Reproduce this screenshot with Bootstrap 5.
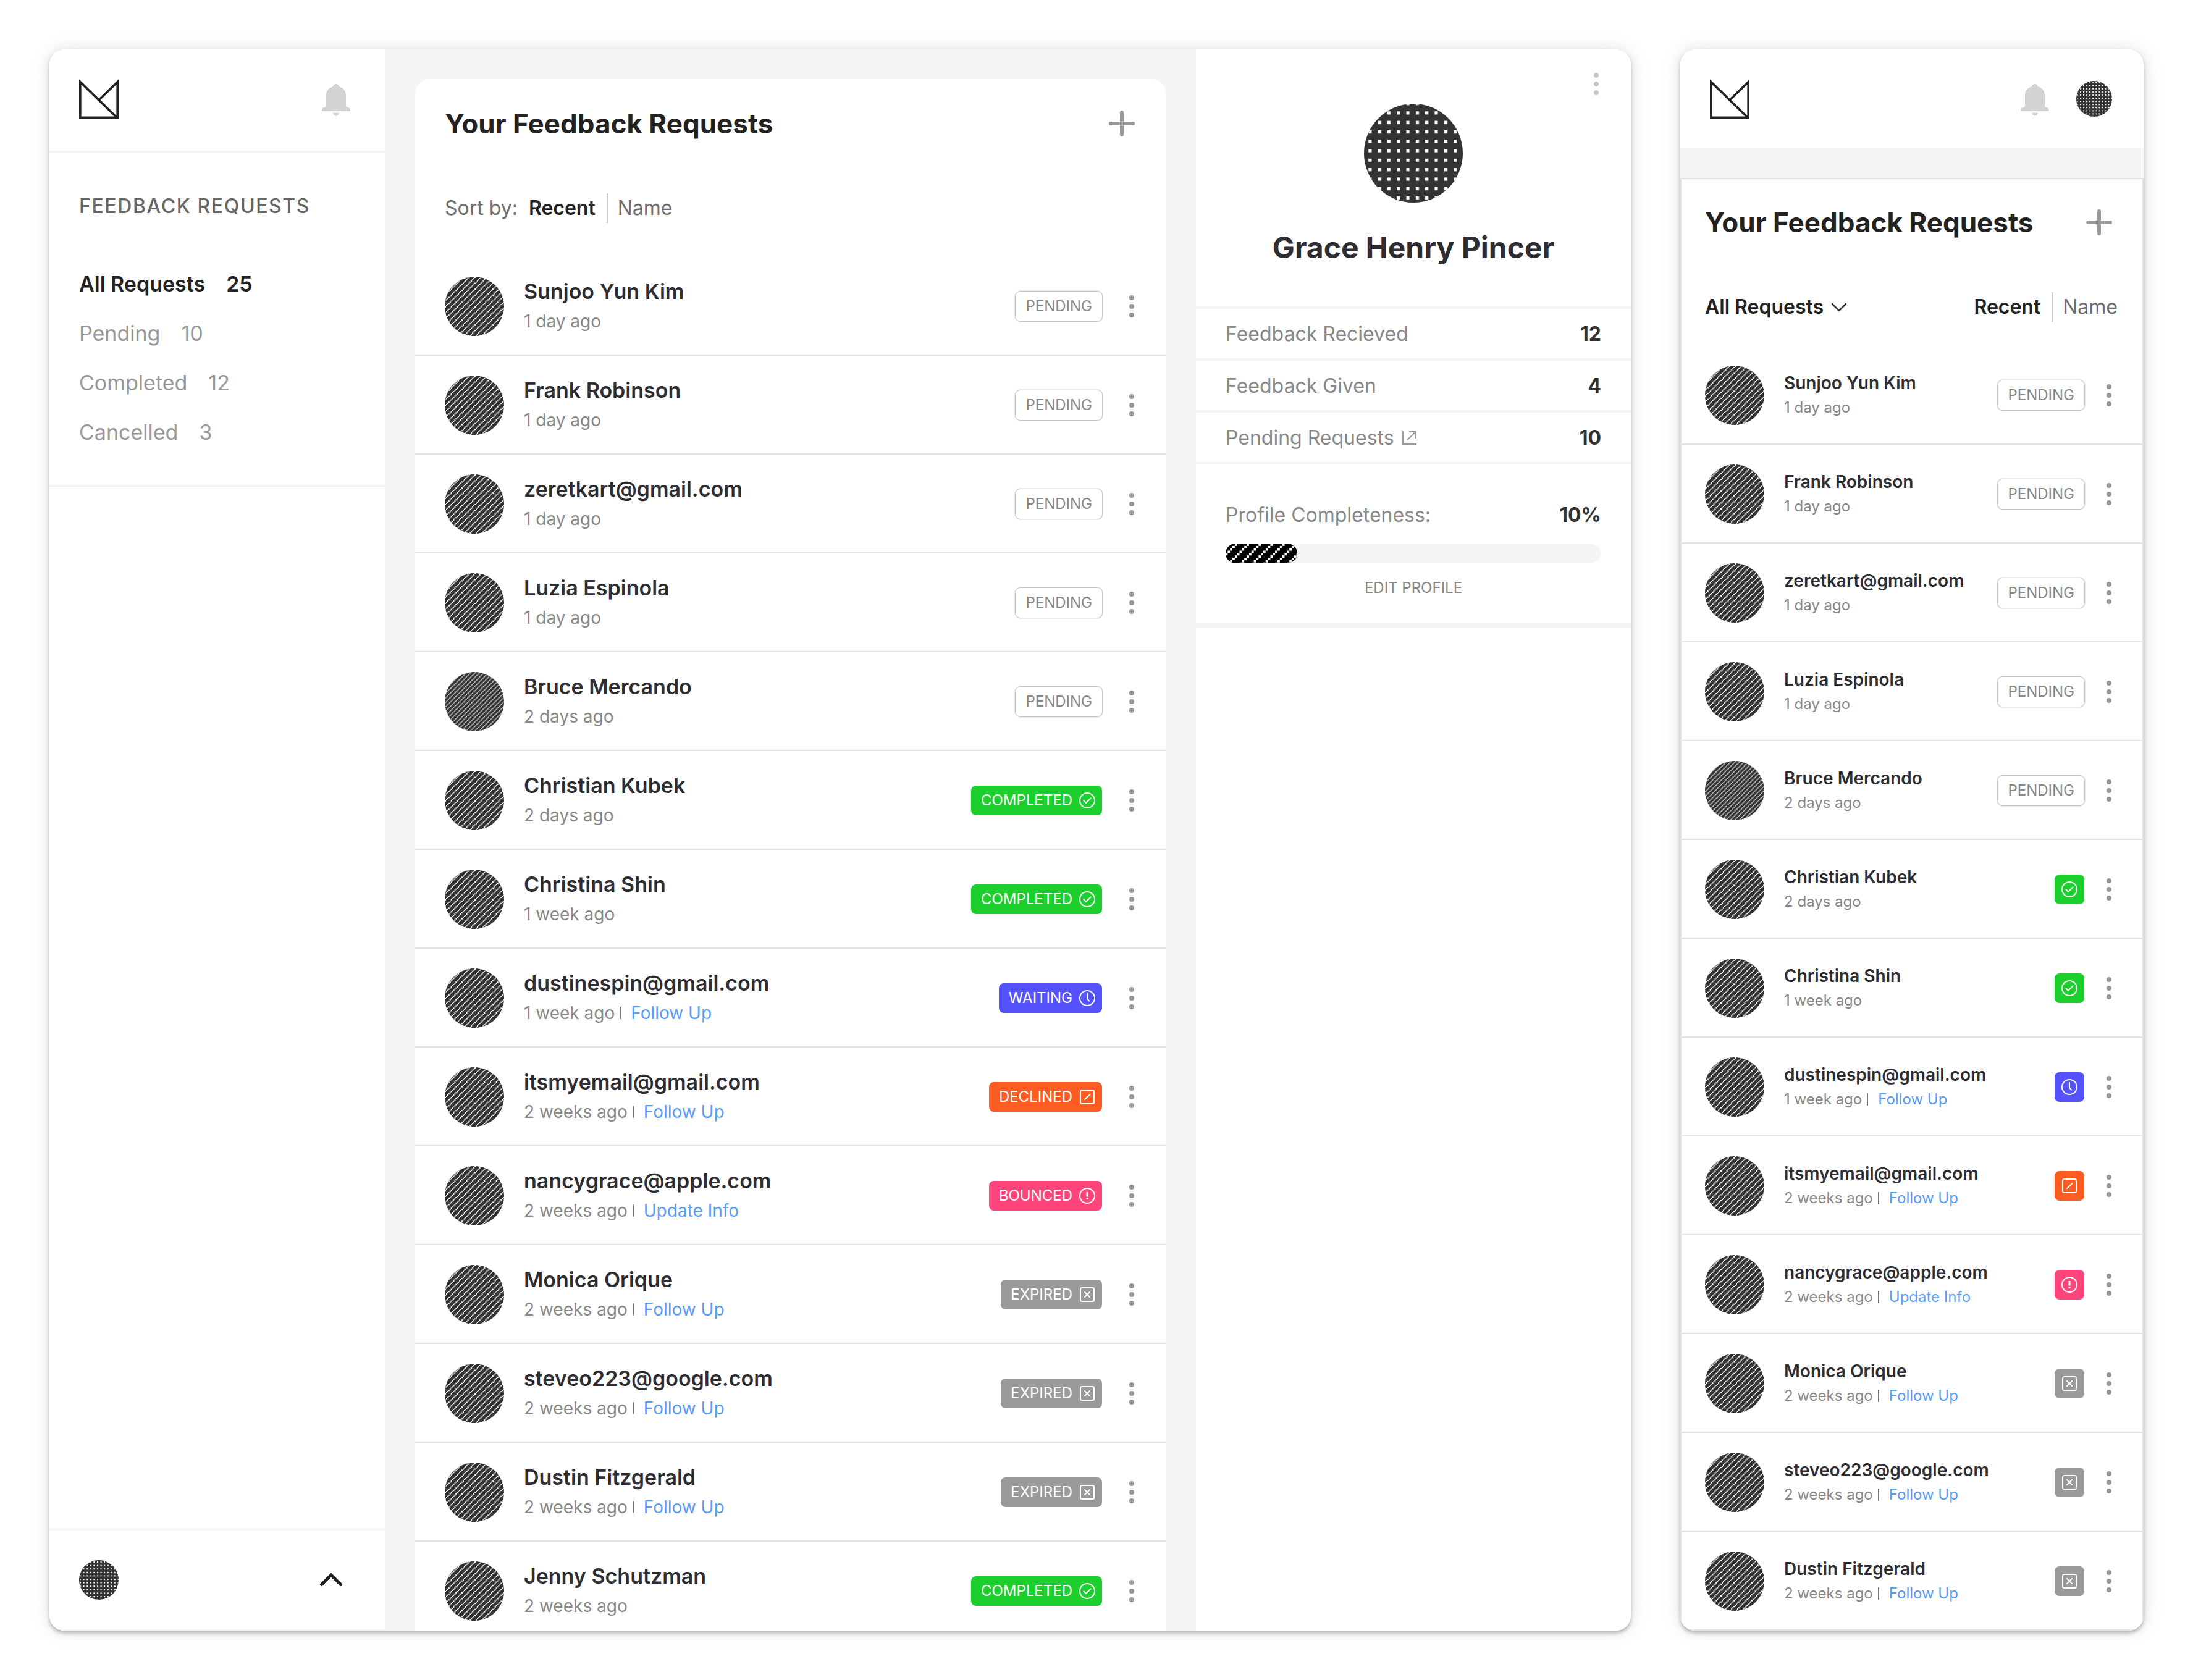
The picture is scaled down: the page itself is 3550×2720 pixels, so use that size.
<!DOCTYPE html>
<html lang="en">
<head>
<meta charset="utf-8">
<meta name="viewport" content="width=device-width, initial-scale=1">
<title>Your Feedback Requests</title>
<link rel="stylesheet" href="https://cdn.jsdelivr.net/npm/bootstrap@5.3.0/dist/css/bootstrap.min.css">
<script src="https://cdn.jsdelivr.net/npm/bootstrap@5.3.0/dist/js/bootstrap.bundle.min.js" defer></script>
<style>
  body { font-family: Inter, "Liberation Sans", sans-serif; font-size: 32px; line-height: 48px; color: #222; background: #fff; padding: 80px; gap: 80px; }
  button, select { font: inherit; color: inherit; background: none; border: 0; padding: 0; }
  svg { display: block; flex: none; }
  h1, h2, ul, p, dl, dd, dt { margin: 0; }
  .app-window { background: #f5f5f5; border-radius: 24px; overflow: hidden; box-shadow: 0 4px 6px rgba(0,0,0,.27), 0 0 32px rgba(0,0,0,.12); }
  .phone { flex: 0 0 750px; }

  .side { flex: 0 0 544px; border-bottom: 2px solid #f5f5f5; }
  .side-top { padding: 48px 56px 52px 48px; border-bottom: 4px solid #f5f5f5; }
  .side-nav { padding: 62px 48px 46px; border-bottom: 2px solid #f5f5f5; }
  .side-nav h2 { font-size: 32px; line-height: 48px; font-weight: 500; color: #666; letter-spacing: .05em; margin-bottom: 62px; }
  .side-nav a { display: flex; gap: 34px; font-size: 34px; line-height: 80px; color: #999; text-decoration: none; }
  .side-nav a.active { color: #222; font-weight: 600; }
  .side-foot { padding: 48px 68px 48px 48px; border-top: 4px solid #f5f5f5; }

  .main-col { padding: 48px 48px 0; }
  .request-panel { border-radius: 24px 24px 0 0; }
  .panel-title { font-size: 44px; line-height: 48px; font-weight: 700; }
  .panel-top { padding: 48px 48px 0; }
  .sort-bar { padding: 89px 48px 55px; color: #6d6d70; }
  .sort-bar .on { color: #222; font-weight: 600; }
  .sort-label { margin-right: 18px; }
  .sort-line { width: 2px; height: 48px; background: #c8c8c8; margin: 0 16px 0 18px; }

  .request { height: 160px; border-bottom: 2px solid #e3e3e3; padding: 2px 32px 0 48px; }
  .who { margin-left: 32px; }
  .who-name { font-size: 34px; line-height: 48px; font-weight: 600; color: #2d2d33; }
  .who-time { font-size: 28px; line-height: 48px; color: #888; }
  .who-time a { color: #5b9cf8; text-decoration: none; margin-left: 16px; }
  .bar { width: 2px; height: 20px; background: #777; margin-left: 8px; }
  .status { height: 48px; padding: 0 8px 0 16px; gap: 8px; border-radius: 8px; font-size: 24px; font-weight: 400; line-height: 48px; color: #fff; }
  .status-pending { padding: 0 16px; color: #888; background: #fff; box-shadow: 0 0 2px 1px #b0b0b0; }
  .status-completed { background: #1ccf2c; }
  .status-waiting { background: #5453ff; }
  .status-declined { background: #ff5c24; }
  .status-bounced { background: #ff457c; }
  .status-expired { background: #9a9a9a; }
  .kebab { width: 48px; height: 48px; color: #999; display: flex; align-items: center; justify-content: center; }
  .request .kebab { margin-left: 24px; }

  .profile { flex: 0 0 704px; }
  .profile > .kebab { top: 32px; right: 32px; color: #c6c6c6; }
  .profile-top { padding: 88px 48px 71px; }
  .profile-top h2 { font-size: 48px; line-height: 48px; font-weight: 700; color: #2d2d33; margin-top: 49px; }
  .stat { border-top: 4px solid #f5f5f5; padding: 2px 48px 0; line-height: 78px; color: #888; }
  .stat dt { gap: 12px; }
  .stat dd, .done dd { font-weight: 700; color: #333; }
  .done { border-top: 4px solid #f5f5f5; border-bottom: 8px solid #f5f5f5; padding: 62px 48px 40px; }
  .done dl { line-height: 40px; color: #888; }
  .meter-track { height: 32px; border-radius: 16px; background: #f5f5f5; margin: 26px 0 24px; }
  .meter-fill { border-radius: 16px; background: #000; }
  .edit { font-size: 24px; line-height: 32px; color: #888; text-decoration: none; }

  .phone-top { height: 160px; padding: 0 51px 0 48px; }
  .phone-me { margin-left: 43px; }
  .phone-body { margin-top: 48px; border: 2px solid #e3e3e3; border-bottom: 0; }
  .phone .panel-top { padding: 46px 46px 0 38px; }
  .phone .sort-bar { padding: 89px 40px 39px 38px; }
  .phone .request { padding: 2px 30px 0 38px; }
  .phone .who-name { font-size: 28px; line-height: 40px; }
  .phone .who-time { font-size: 24px; line-height: 40px; }
  .phone .status-icon { padding: 0 8px; }
  .phone .request .kebab { margin-left: 16px; }
  .filter { gap: 10px; }
  .filter select { appearance: none; -webkit-appearance: none; height: 48px; }
  .bell { padding-top: 3px; }
</style>
</head>
<body class="vh-100 d-flex">

<svg width="0" height="0" class="position-absolute" aria-hidden="true">
  <defs>
    <pattern id="stripes" width="9.6" height="9.6" patternUnits="userSpaceOnUse" patternTransform="translate(2 0)">
      <path fill="#fff" d="M0 7.7h1.9v1.9H0zM1.9 5.8h1.9v1.9H1.9zM3.8 3.8h2v2h-2zM5.8 1.9h1.9v1.9H5.8zM7.7 0h1.9v1.9H7.7z"/>
    </pattern>
    <pattern id="stripes-fine" width="7.2" height="7.2" patternUnits="userSpaceOnUse">
      <path fill="#fff" d="M0 5.800h1.400v1.400H0zM1.400 4.300h1.500v1.500H1.400zM2.900 2.900h1.400v1.400H2.900zM4.300 1.400h1.500v1.500H4.300zM5.800 0h1.400v1.400H5.800z"/>
    </pattern>
    <pattern id="stripes-bold" width="19.2" height="19.2" patternUnits="userSpaceOnUse" patternTransform="translate(-.5 0)">
      <path fill="#fff" d="M0 15.4h3.8v3.8H0zM3.8 11.5h3.8v3.8H3.8zM7.7 7.7h3.8v3.8H7.7zM11.5 3.8h3.8v3.8h-3.8zM15.4 0h3.8v3.8h-3.8z"/>
    </pattern>
    <pattern id="dots" width="15.3" height="15.3" patternUnits="userSpaceOnUse" patternTransform="translate(7.3 12.3)">
      <path fill="#fff" d="M0 0h5.2v5.2H0z"/>
    </pattern>
    <pattern id="dots-small" width="5.6" height="5.6" patternUnits="userSpaceOnUse" patternTransform="translate(1 2)">
      <path fill="#fff" d="M0 0h2v2H0z"/>
    </pattern>
  </defs>
  <symbol id="person" viewBox="0 0 96 96"><circle cx="48" cy="48" r="48" fill="#333"/><circle cx="48" cy="48" r="48" fill="url(#stripes)"/></symbol>
  <symbol id="person-fine" viewBox="0 0 96 96"><circle cx="48" cy="48" r="48" fill="#333"/><circle cx="48" cy="48" r="48" fill="url(#stripes-fine)"/></symbol>
  <symbol id="me" viewBox="0 0 160 160"><circle cx="80" cy="80" r="80" fill="#333"/><circle cx="80" cy="80" r="80" fill="url(#dots)"/></symbol>
  <symbol id="me-small" viewBox="0 0 64 64"><circle cx="32" cy="32" r="32" fill="#333"/><circle cx="32" cy="32" r="32" fill="url(#dots-small)"/></symbol>
  <symbol id="logo" viewBox="0 0 64 64"><path d="M61 62.2 1.8 4.6V62.2H62.2V4.6L32 34" fill="none" stroke="#222" stroke-width="3.6"/></symbol>
  <symbol id="bell" viewBox="0 0 48 52"><path fill="#d3d3d3" d="M24 0c2.700 0 4.700 1.700 5 4.200C36 6.200 40 11.500 40 18v16c0 2.500 1 3.600 3.400 4C46 38.500 47 40 47 42v1.200c0 .5-.3.800-.8.800H1.800c-.5 0-.8-.3-.8-.8V42c0-2 1-3.500 3.600-4C7 37.600 8 36.500 8 34V18C8 11.500 12 6.200 19 4.200 19.300 1.700 21.300 0 24 0zM19.200 46.800h9.600c0 2.700-2 4.700-4.800 4.700s-4.800-2-4.800-4.700z"/></symbol>
  <symbol id="plus" viewBox="0 0 48 48"><path d="M24 6v36M6 24h36" stroke="#999" stroke-width="6" stroke-linecap="round"/></symbol>
  <symbol id="kebab" viewBox="0 0 8 36"><g fill="currentColor"><circle cx="4" cy="4" r="4"/><circle cx="4" cy="18" r="4"/><circle cx="4" cy="32" r="4"/></g></symbol>
  <symbol id="check" viewBox="0 0 32 32"><g fill="none" stroke="#fff" stroke-width="2" stroke-linecap="round" stroke-linejoin="round"><circle cx="16" cy="16" r="12"/><path d="m10.500 16.500 3.500 3.500 7.500-7.500"/></g></symbol>
  <symbol id="clock" viewBox="0 0 32 32"><g fill="none" stroke="#fff" stroke-width="2" stroke-linecap="round" stroke-linejoin="round"><circle cx="16" cy="16" r="12"/><path d="M16 9v8l3 3.500"/></g></symbol>
  <symbol id="slash" viewBox="0 0 32 32"><g fill="none" stroke="#fff" stroke-width="2" stroke-linecap="round"><rect x="5" y="5" width="22" height="22" rx="2.500"/><path d="m12 20 8.500-8"/></g></symbol>
  <symbol id="alert" viewBox="0 0 32 32"><g fill="none" stroke="#fff" stroke-width="2"><circle cx="16" cy="16" r="12"/><path d="M16 10v7.500M16 19.500v2.500" stroke-width="3"/></g></symbol>
  <symbol id="cross" viewBox="0 0 32 32"><g fill="none" stroke="#fff" stroke-width="2" stroke-linecap="round"><rect x="5" y="5" width="22" height="22" rx="2.500"/><path d="m12 12 8 8M20 12l-8 8"/></g></symbol>
</svg>

<div class="app-window flex-grow-1 d-flex">
  <aside class="side bg-white d-flex flex-column">
    <div class="side-top d-flex justify-content-between align-items-center">
      <svg width="64" height="64" role="img" aria-label="Logo"><use href="#logo"/></svg>
      <button type="button" class="bell" aria-label="Notifications"><svg width="48" height="52"><use href="#bell"/></svg></button>
    </div>
    <nav class="side-nav">
      <h2>FEEDBACK REQUESTS</h2>
      <a href="#" class="active"><span>All Requests</span><span>25</span></a>
      <a href="#"><span>Pending</span><span>10</span></a>
      <a href="#"><span>Completed</span><span>12</span></a>
      <a href="#"><span>Cancelled</span><span>3</span></a>
    </nav>
    <div class="side-foot d-flex justify-content-between align-items-center mt-auto">
      <svg width="64" height="64"><use href="#me-small"/></svg>
      <button type="button" aria-label="Open account menu"><svg width="40" height="28" viewBox="0 0 40 28"><path d="M4.500 21.500 20 6l15.500 15.500" fill="none" stroke="#222" stroke-width="5" stroke-linecap="round"/></svg></button>
    </div>
  </aside>

  <main class="main-col flex-grow-1 d-flex flex-column">
    <section class="request-panel bg-white flex-grow-1">
      <div class="panel-top d-flex justify-content-between align-items-center">
        <h1 class="panel-title">Your Feedback Requests</h1>
        <button type="button" aria-label="New request"><svg width="48" height="48"><use href="#plus"/></svg></button>
      </div>
      <div class="sort-bar d-flex align-items-center">
        <span class="sort-label">Sort by:</span>
        <button type="button" class="on">Recent</button><span class="sort-line"></span><button type="button">Name</button>
      </div>
      <ul class="list-unstyled">
        <li class="request d-flex align-items-center"><svg width="96" height="96"><use href="#person"/></svg><div class="who flex-grow-1"><div class="who-name">Sunjoo Yun Kim</div><div class="who-time">1 day ago</div></div><span class="badge status status-pending">PENDING</span><button type="button" class="kebab" aria-label="More"><svg width="8" height="36"><use href="#kebab"/></svg></button></li>
        <li class="request d-flex align-items-center"><svg width="96" height="96"><use href="#person"/></svg><div class="who flex-grow-1"><div class="who-name">Frank Robinson</div><div class="who-time">1 day ago</div></div><span class="badge status status-pending">PENDING</span><button type="button" class="kebab" aria-label="More"><svg width="8" height="36"><use href="#kebab"/></svg></button></li>
        <li class="request d-flex align-items-center"><svg width="96" height="96"><use href="#person"/></svg><div class="who flex-grow-1"><div class="who-name">zeretkart@gmail.com</div><div class="who-time">1 day ago</div></div><span class="badge status status-pending">PENDING</span><button type="button" class="kebab" aria-label="More"><svg width="8" height="36"><use href="#kebab"/></svg></button></li>
        <li class="request d-flex align-items-center"><svg width="96" height="96"><use href="#person"/></svg><div class="who flex-grow-1"><div class="who-name">Luzia Espinola</div><div class="who-time">1 day ago</div></div><span class="badge status status-pending">PENDING</span><button type="button" class="kebab" aria-label="More"><svg width="8" height="36"><use href="#kebab"/></svg></button></li>
        <li class="request d-flex align-items-center"><svg width="96" height="96"><use href="#person-fine"/></svg><div class="who flex-grow-1"><div class="who-name">Bruce Mercando</div><div class="who-time">2 days ago</div></div><span class="badge status status-pending">PENDING</span><button type="button" class="kebab" aria-label="More"><svg width="8" height="36"><use href="#kebab"/></svg></button></li>
        <li class="request d-flex align-items-center"><svg width="96" height="96"><use href="#person"/></svg><div class="who flex-grow-1"><div class="who-name">Christian Kubek</div><div class="who-time">2 days ago</div></div><span class="badge status status-completed d-flex align-items-center">COMPLETED<svg width="32" height="32"><use href="#check"/></svg></span><button type="button" class="kebab" aria-label="More"><svg width="8" height="36"><use href="#kebab"/></svg></button></li>
        <li class="request d-flex align-items-center"><svg width="96" height="96"><use href="#person"/></svg><div class="who flex-grow-1"><div class="who-name">Christina Shin</div><div class="who-time">1 week ago</div></div><span class="badge status status-completed d-flex align-items-center">COMPLETED<svg width="32" height="32"><use href="#check"/></svg></span><button type="button" class="kebab" aria-label="More"><svg width="8" height="36"><use href="#kebab"/></svg></button></li>
        <li class="request d-flex align-items-center"><svg width="96" height="96"><use href="#person"/></svg><div class="who flex-grow-1"><div class="who-name">dustinespin@gmail.com</div><div class="who-time d-flex align-items-center">1 week ago<span class="bar"></span><a href="#">Follow Up</a></div></div><span class="badge status status-waiting d-flex align-items-center">WAITING<svg width="32" height="32"><use href="#clock"/></svg></span><button type="button" class="kebab" aria-label="More"><svg width="8" height="36"><use href="#kebab"/></svg></button></li>
        <li class="request d-flex align-items-center"><svg width="96" height="96"><use href="#person"/></svg><div class="who flex-grow-1"><div class="who-name">itsmyemail@gmail.com</div><div class="who-time d-flex align-items-center">2 weeks ago<span class="bar"></span><a href="#">Follow Up</a></div></div><span class="badge status status-declined d-flex align-items-center">DECLINED<svg width="32" height="32"><use href="#slash"/></svg></span><button type="button" class="kebab" aria-label="More"><svg width="8" height="36"><use href="#kebab"/></svg></button></li>
        <li class="request d-flex align-items-center"><svg width="96" height="96"><use href="#person"/></svg><div class="who flex-grow-1"><div class="who-name">nancygrace@apple.com</div><div class="who-time d-flex align-items-center">2 weeks ago<span class="bar"></span><a href="#">Update Info</a></div></div><span class="badge status status-bounced d-flex align-items-center">BOUNCED<svg width="32" height="32"><use href="#alert"/></svg></span><button type="button" class="kebab" aria-label="More"><svg width="8" height="36"><use href="#kebab"/></svg></button></li>
        <li class="request d-flex align-items-center"><svg width="96" height="96"><use href="#person"/></svg><div class="who flex-grow-1"><div class="who-name">Monica Orique</div><div class="who-time d-flex align-items-center">2 weeks ago<span class="bar"></span><a href="#">Follow Up</a></div></div><span class="badge status status-expired d-flex align-items-center">EXPIRED<svg width="32" height="32"><use href="#cross"/></svg></span><button type="button" class="kebab" aria-label="More"><svg width="8" height="36"><use href="#kebab"/></svg></button></li>
        <li class="request d-flex align-items-center"><svg width="96" height="96"><use href="#person"/></svg><div class="who flex-grow-1"><div class="who-name">steveo223@google.com</div><div class="who-time d-flex align-items-center">2 weeks ago<span class="bar"></span><a href="#">Follow Up</a></div></div><span class="badge status status-expired d-flex align-items-center">EXPIRED<svg width="32" height="32"><use href="#cross"/></svg></span><button type="button" class="kebab" aria-label="More"><svg width="8" height="36"><use href="#kebab"/></svg></button></li>
        <li class="request d-flex align-items-center"><svg width="96" height="96"><use href="#person"/></svg><div class="who flex-grow-1"><div class="who-name">Dustin Fitzgerald</div><div class="who-time d-flex align-items-center">2 weeks ago<span class="bar"></span><a href="#">Follow Up</a></div></div><span class="badge status status-expired d-flex align-items-center">EXPIRED<svg width="32" height="32"><use href="#cross"/></svg></span><button type="button" class="kebab" aria-label="More"><svg width="8" height="36"><use href="#kebab"/></svg></button></li>
        <li class="request d-flex align-items-center"><svg width="96" height="96"><use href="#person"/></svg><div class="who flex-grow-1"><div class="who-name">Jenny Schutzman</div><div class="who-time">2 weeks ago</div></div><span class="badge status status-completed d-flex align-items-center">COMPLETED<svg width="32" height="32"><use href="#check"/></svg></span><button type="button" class="kebab" aria-label="More"><svg width="8" height="36"><use href="#kebab"/></svg></button></li>
      </ul>
    </section>
  </main>

  <aside class="profile bg-white position-relative">
    <button type="button" class="kebab position-absolute" aria-label="Profile menu"><svg width="8" height="36"><use href="#kebab"/></svg></button>
    <div class="profile-top d-flex flex-column align-items-center">
      <svg width="160" height="160"><use href="#me"/></svg>
      <h2>Grace Henry Pincer</h2>
    </div>
    <dl>
      <div class="stat d-flex justify-content-between"><dt class="fw-normal">Feedback Recieved</dt><dd>12</dd></div>
      <div class="stat d-flex justify-content-between"><dt class="fw-normal">Feedback Given</dt><dd>4</dd></div>
      <div class="stat d-flex justify-content-between"><dt class="fw-normal d-flex align-items-center">Pending Requests<svg width="24" height="24" viewBox="0 0 24 24"><path d="M2 1v21h22M12 2h10.500v11M22 2.500 9 15.500" fill="none" stroke="#999" stroke-width="2"/></svg></dt><dd>10</dd></div>
    </dl>
    <div class="done text-center">
      <dl class="d-flex justify-content-between"><dt class="fw-normal">Profile Completeness:</dt><dd>10%</dd></dl>
      <div class="meter-track" role="progressbar" aria-label="Profile completeness" aria-valuenow="10" aria-valuemin="0" aria-valuemax="100"><svg class="meter-fill" width="116" height="32"><rect width="116" height="32" fill="url(#stripes-bold)"/></svg></div>
      <a href="#" class="edit d-block">EDIT PROFILE</a>
    </div>
  </aside>
</div>

<div class="app-window phone d-flex flex-column">
  <header class="phone-top bg-white d-flex align-items-center">
    <svg width="64" height="64" role="img" aria-label="Logo"><use href="#logo"/></svg>
    <button type="button" class="bell ms-auto" aria-label="Notifications"><svg width="48" height="52"><use href="#bell"/></svg></button>
    <svg width="58" height="58" class="phone-me"><use href="#me-small"/></svg>
  </header>
  <section class="phone-body bg-white flex-grow-1">
    <div class="panel-top d-flex justify-content-between align-items-center">
      <h2 class="panel-title">Your Feedback Requests</h2>
      <button type="button" aria-label="New request"><svg width="48" height="48"><use href="#plus"/></svg></button>
    </div>
    <div class="sort-bar d-flex align-items-center">
      <label class="filter on d-flex align-items-center me-auto"><select aria-label="Show requests"><option>All Requests</option><option>Pending</option><option>Completed</option><option>Cancelled</option></select><svg width="28" height="20" viewBox="0 0 28 20"><path d="m3 5 11 11L25 5" fill="none" stroke="#333" stroke-width="2.500" stroke-linecap="round" stroke-linejoin="round"/></svg></label>
      <button type="button" class="on">Recent</button><span class="sort-line"></span><button type="button">Name</button>
    </div>
    <ul class="list-unstyled">
      <li class="request d-flex align-items-center"><svg width="96" height="96"><use href="#person"/></svg><div class="who flex-grow-1"><div class="who-name">Sunjoo Yun Kim</div><div class="who-time">1 day ago</div></div><span class="badge status status-pending">PENDING</span><button type="button" class="kebab" aria-label="More"><svg width="8" height="36"><use href="#kebab"/></svg></button></li>
      <li class="request d-flex align-items-center"><svg width="96" height="96"><use href="#person"/></svg><div class="who flex-grow-1"><div class="who-name">Frank Robinson</div><div class="who-time">1 day ago</div></div><span class="badge status status-pending">PENDING</span><button type="button" class="kebab" aria-label="More"><svg width="8" height="36"><use href="#kebab"/></svg></button></li>
      <li class="request d-flex align-items-center"><svg width="96" height="96"><use href="#person"/></svg><div class="who flex-grow-1"><div class="who-name">zeretkart@gmail.com</div><div class="who-time">1 day ago</div></div><span class="badge status status-pending">PENDING</span><button type="button" class="kebab" aria-label="More"><svg width="8" height="36"><use href="#kebab"/></svg></button></li>
      <li class="request d-flex align-items-center"><svg width="96" height="96"><use href="#person"/></svg><div class="who flex-grow-1"><div class="who-name">Luzia Espinola</div><div class="who-time">1 day ago</div></div><span class="badge status status-pending">PENDING</span><button type="button" class="kebab" aria-label="More"><svg width="8" height="36"><use href="#kebab"/></svg></button></li>
      <li class="request d-flex align-items-center"><svg width="96" height="96"><use href="#person-fine"/></svg><div class="who flex-grow-1"><div class="who-name">Bruce Mercando</div><div class="who-time">2 days ago</div></div><span class="badge status status-pending">PENDING</span><button type="button" class="kebab" aria-label="More"><svg width="8" height="36"><use href="#kebab"/></svg></button></li>
      <li class="request d-flex align-items-center"><svg width="96" height="96"><use href="#person"/></svg><div class="who flex-grow-1"><div class="who-name">Christian Kubek</div><div class="who-time">2 days ago</div></div><span class="badge status status-icon status-completed d-flex align-items-center"><svg width="32" height="32" role="img" aria-label="Completed"><use href="#check"/></svg></span><button type="button" class="kebab" aria-label="More"><svg width="8" height="36"><use href="#kebab"/></svg></button></li>
      <li class="request d-flex align-items-center"><svg width="96" height="96"><use href="#person"/></svg><div class="who flex-grow-1"><div class="who-name">Christina Shin</div><div class="who-time">1 week ago</div></div><span class="badge status status-icon status-completed d-flex align-items-center"><svg width="32" height="32" role="img" aria-label="Completed"><use href="#check"/></svg></span><button type="button" class="kebab" aria-label="More"><svg width="8" height="36"><use href="#kebab"/></svg></button></li>
      <li class="request d-flex align-items-center"><svg width="96" height="96"><use href="#person"/></svg><div class="who flex-grow-1"><div class="who-name">dustinespin@gmail.com</div><div class="who-time d-flex align-items-center">1 week ago<span class="bar"></span><a href="#">Follow Up</a></div></div><span class="badge status status-icon status-waiting d-flex align-items-center"><svg width="32" height="32" role="img" aria-label="Waiting"><use href="#clock"/></svg></span><button type="button" class="kebab" aria-label="More"><svg width="8" height="36"><use href="#kebab"/></svg></button></li>
      <li class="request d-flex align-items-center"><svg width="96" height="96"><use href="#person"/></svg><div class="who flex-grow-1"><div class="who-name">itsmyemail@gmail.com</div><div class="who-time d-flex align-items-center">2 weeks ago<span class="bar"></span><a href="#">Follow Up</a></div></div><span class="badge status status-icon status-declined d-flex align-items-center"><svg width="32" height="32" role="img" aria-label="Declined"><use href="#slash"/></svg></span><button type="button" class="kebab" aria-label="More"><svg width="8" height="36"><use href="#kebab"/></svg></button></li>
      <li class="request d-flex align-items-center"><svg width="96" height="96"><use href="#person"/></svg><div class="who flex-grow-1"><div class="who-name">nancygrace@apple.com</div><div class="who-time d-flex align-items-center">2 weeks ago<span class="bar"></span><a href="#">Update Info</a></div></div><span class="badge status status-icon status-bounced d-flex align-items-center"><svg width="32" height="32" role="img" aria-label="Bounced"><use href="#alert"/></svg></span><button type="button" class="kebab" aria-label="More"><svg width="8" height="36"><use href="#kebab"/></svg></button></li>
      <li class="request d-flex align-items-center"><svg width="96" height="96"><use href="#person"/></svg><div class="who flex-grow-1"><div class="who-name">Monica Orique</div><div class="who-time d-flex align-items-center">2 weeks ago<span class="bar"></span><a href="#">Follow Up</a></div></div><span class="badge status status-icon status-expired d-flex align-items-center"><svg width="32" height="32" role="img" aria-label="Expired"><use href="#cross"/></svg></span><button type="button" class="kebab" aria-label="More"><svg width="8" height="36"><use href="#kebab"/></svg></button></li>
      <li class="request d-flex align-items-center"><svg width="96" height="96"><use href="#person"/></svg><div class="who flex-grow-1"><div class="who-name">steveo223@google.com</div><div class="who-time d-flex align-items-center">2 weeks ago<span class="bar"></span><a href="#">Follow Up</a></div></div><span class="badge status status-icon status-expired d-flex align-items-center"><svg width="32" height="32" role="img" aria-label="Expired"><use href="#cross"/></svg></span><button type="button" class="kebab" aria-label="More"><svg width="8" height="36"><use href="#kebab"/></svg></button></li>
      <li class="request d-flex align-items-center"><svg width="96" height="96"><use href="#person"/></svg><div class="who flex-grow-1"><div class="who-name">Dustin Fitzgerald</div><div class="who-time d-flex align-items-center">2 weeks ago<span class="bar"></span><a href="#">Follow Up</a></div></div><span class="badge status status-icon status-expired d-flex align-items-center"><svg width="32" height="32" role="img" aria-label="Expired"><use href="#cross"/></svg></span><button type="button" class="kebab" aria-label="More"><svg width="8" height="36"><use href="#kebab"/></svg></button></li>
    </ul>
  </section>
</div>
</body>
</html>
